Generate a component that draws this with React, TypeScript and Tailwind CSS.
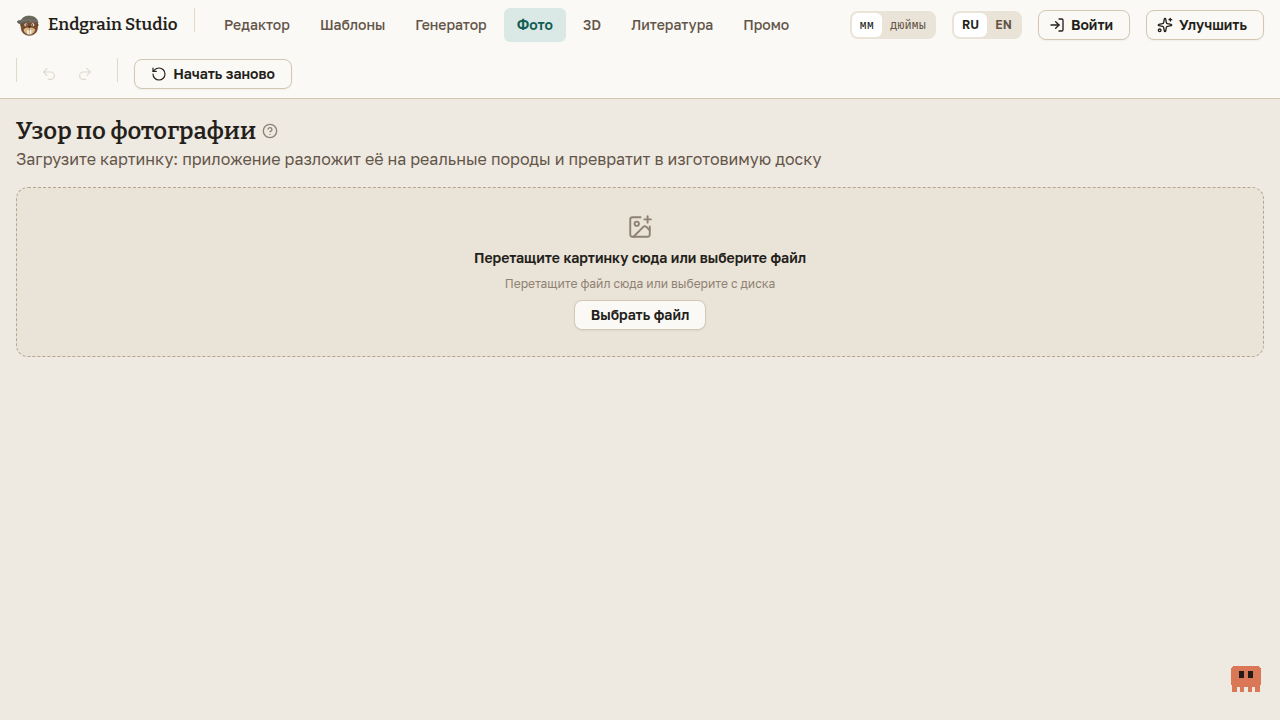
import { useState } from 'react';
import { CircleHelp, ImagePlus, LogIn, Redo2, RotateCcw, Sparkles, Undo2 } from 'lucide-react';

const tabs = ['Редактор', 'Шаблоны', 'Генератор', 'Фото', '3D', 'Литература', 'Промо'];

const button =
  'flex h-[30px] items-center justify-center rounded-lg border border-[#d3c7b3] bg-[#faf9f5] text-sm font-semibold text-[#241f1b] shadow-xs whitespace-nowrap';

function Logo() {
  return (
    <svg className="h-6 w-6 shrink-0" viewBox="0 0 24 24" aria-hidden="true">
      <circle cx="5.8" cy="12" r="1.6" fill="#70472b" />
      <circle cx="21" cy="12" r="1.6" fill="#70472b" />
      <path d="M5.200 9.500h16.300v5.700q-.5 6.600-8.200 7.300-7.600-.7-8.100-7.300z" fill="#7d4a28" stroke="#49362a" strokeWidth=".5" />
      <path d="M7.500 16.500q2.300-2.500 5.800-2 3.600-.5 5.900 2-1 4.500-5.900 5.200-4.800-.7-5.800-5.200z" fill="#d9b98c" />
      <circle cx="9.800" cy="11.800" r="1.500" fill="#f1e8d6" />
      <circle cx="16.800" cy="11.800" r="1.500" fill="#f1e8d6" />
      <circle cx="10.200" cy="12" r=".8" fill="#221c19" />
      <circle cx="16.400" cy="12" r=".8" fill="#221c19" />
      <path d="M11.600 13.200h3.400l-1.700 2z" fill="#302621" />
      <path d="M11.300 17.200h4v4h-4z" fill="#fff7e5" />
      <path d="M13.300 15.200v6" stroke="#7c5b3c" strokeWidth=".5" />
      <path d="M1 8.800Q2 7.200 5.300 7.200 7 3.200 13 3q8.300.1 9 7-4-1.900-10-1-3 .8-6.500 2-3 .1-4.500-2.200z" fill="#6b675b" stroke="#4e4b42" strokeWidth=".6" />
      <path d="M6 7.500q7-1.700 15.500 1" fill="none" stroke="#858072" strokeWidth=".6" />
    </svg>
  );
}

function Divider() {
  return <div className="h-6 w-px shrink-0 bg-[#e2d8c8]" />;
}

export default function App() {
  const [tab, setTab] = useState('Фото');
  const [unit, setUnit] = useState('мм');
  const [lang, setLang] = useState('RU');

  return (
    <div className="flex min-h-screen flex-col bg-[#eee9e1] font-['Golos_Text','Inter','Liberation_Sans',sans-serif] text-[#241f1b]">
      <header className="border-b border-[#d3c7b3] bg-[#faf9f5]">
        <div className="flex h-[50px] items-center px-4">
          <a href="#" className="mr-4 flex items-center gap-2 font-['Bitter','Noto_Serif','Liberation_Serif',serif] text-[17px] font-semibold whitespace-nowrap">
            <Logo />
            <span className="w-[130px]">Endgrain Studio</span>
          </a>
          <div className="-mt-2.5"><Divider /></div>
          <nav className="ml-4 flex gap-1 whitespace-nowrap">
            {tabs.map((name) => (
              <button
                key={name}
                onClick={() => setTab(name)}
                className={
                  tab === name
                    ? 'h-[34px] rounded-md bg-[#dae9e5] px-[13px] text-sm font-semibold text-[#125e55]'
                    : 'h-[34px] rounded-md px-[13px] text-sm font-medium text-[#635548]'
                }
              >
                {name}
              </button>
            ))}
          </nav>
          <div className="ml-auto flex items-center gap-4">
            <div className="flex h-7 rounded-lg bg-[#eae3d7] p-0.5 font-['JetBrains_Mono','Roboto_Mono','Liberation_Mono',monospace] text-xs">
              {['мм', 'дюймы'].map((name) => (
                <button
                  key={name}
                  onClick={() => setUnit(name)}
                  className={unit === name ? 'rounded-md bg-white px-2 text-[#241f1b]' : 'px-2 text-[#635548]'}
                >
                  {name}
                </button>
              ))}
            </div>
            <div className="flex h-7 rounded-lg bg-[#eae3d7] p-0.5 text-xs font-semibold">
              {['RU', 'EN'].map((name) => (
                <button
                  key={name}
                  onClick={() => setLang(name)}
                  className={lang === name ? 'w-[33px] rounded-md bg-white text-[#241f1b]' : 'w-[33px] text-[#635548]'}
                >
                  {name}
                </button>
              ))}
            </div>
            <button className={`${button} w-[92px] gap-1.5 pr-1.5`}>
              <LogIn size={16} strokeWidth={2} />
              Войти
            </button>
            <button className={`${button} w-[118px] gap-1.5 pr-1.5`}>
              <Sparkles size={16} strokeWidth={2} />
              Улучшить
            </button>
          </div>
        </div>
        <div className="flex h-12 items-center px-4">
          <div className="-mt-2"><Divider /></div>
          <div className="flex flex-1 items-center">
            <div className="mx-4 flex gap-1">
              <button disabled aria-label="Отменить" className="flex h-8 w-8 items-center justify-center text-[#dfd8cd]">
                <Undo2 size={16} strokeWidth={1.75} />
              </button>
              <button disabled aria-label="Повторить" className="flex h-8 w-8 items-center justify-center text-[#dfd8cd]">
                <Redo2 size={16} strokeWidth={1.75} />
              </button>
            </div>
            <div className="mr-4 -mt-2"><Divider /></div>
            <button className={`${button} w-[158px] gap-1.5`}>
              <RotateCcw size={16} strokeWidth={1.75} />
              Начать заново
            </button>
          </div>
        </div>
      </header>

      <main className="px-4 pt-4">
        <div className="flex items-center gap-1.5">
          <h1 className="font-['Bitter','Noto_Serif','Liberation_Serif',serif] text-2xl font-semibold">Узор по фотографии</h1>
          <button aria-label="Справка" className="text-[#8e8273]">
            <CircleHelp size={16} />
          </button>
        </div>
        <p className="text-base text-[#635548]">
          Загрузите картинку: приложение разложит её на реальные породы и превратит в изготовимую доску
        </p>
        <section className="mt-4 flex flex-col items-center rounded-xl border border-dashed border-[#b5a78f] bg-[#eae3d7] py-[26px]">
          <ImagePlus size={26} strokeWidth={1.75} className="text-[#8e8273]" />
          <p className="mt-2 text-sm font-semibold">Перетащите картинку сюда или выберите файл</p>
          <p className="mt-2 text-xs text-[#8e8273]">Перетащите файл сюда или выберите с диска</p>
          <button className={`${button} mt-2 w-[132px]`}>Выбрать файл</button>
        </section>
      </main>

      <button aria-label="Помощник" className="fixed right-[19px] bottom-7">
        <svg width="30" height="26" viewBox="0 0 30 26" shapeRendering="crispEdges" aria-hidden="true">
          <path d="M2 0h26v1h1v1h1v17h-1v7h-5v-5h-3v5h-4v-5h-4v5H9v-5H6v5H1v-7H0V2h1V1h1z" fill="#d97757" />
          <path d="M8 5h5v7H8zM17 5h5v7h-5z" fill="#241b18" />
        </svg>
      </button>
    </div>
  );
}
